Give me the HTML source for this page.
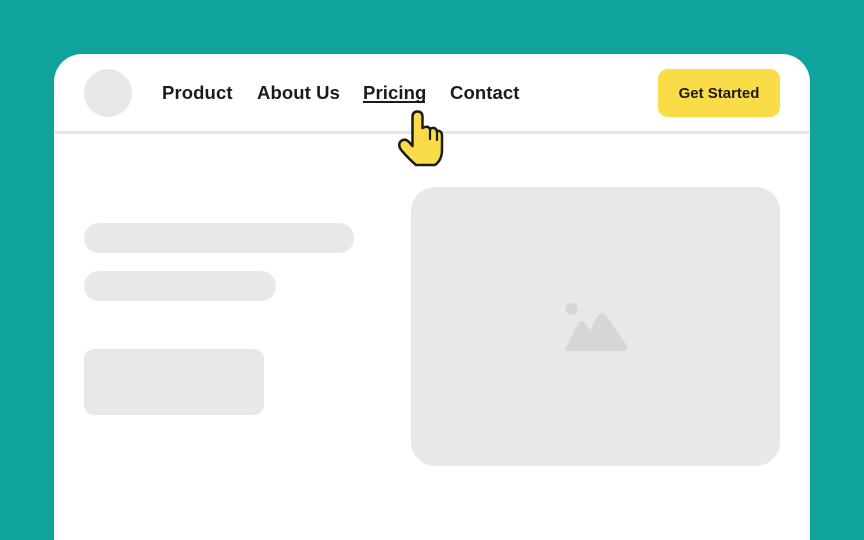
<!DOCTYPE html>
<html><head><style>
html,body{margin:0;width:864px;height:540px;overflow:hidden}
body{background:#10a39e;position:relative;font-family:"Liberation Sans",sans-serif}
.card{position:absolute;left:54px;top:54px;width:756px;height:486px;background:#fff;border-radius:28px 28px 0 0}
.av{position:absolute;left:84px;top:69px;width:48px;height:48px;border-radius:50%;background:#e8e8ea}
.nav{position:absolute;top:82px;font-size:18.5px;font-weight:bold;color:#1b1b1f;letter-spacing:0.1px}
.btn{position:absolute;left:658px;top:69px;width:122px;height:48px;border-radius:10px;background:#fadc48;font-size:15px;font-weight:bold;color:#1b1b1f;text-align:center;line-height:50px}
.line{position:absolute;left:54px;top:131px;width:756px;height:3px;background:#e6e6e8}
.g{position:absolute;background:#e8e8ea}
.ul{position:absolute;left:363px;top:101px;width:62px;height:2px;background:#1b1b1f}
</style></head><body>
<div class="card"></div>
<div class="av"></div>
<div class="nav" style="left:162px">Product</div>
<div class="nav" style="left:257px">About Us</div>
<div class="nav" style="left:363px">Pricing</div>
<div class="ul"></div>
<div class="nav" style="left:450px">Contact</div>
<div class="btn">Get Started</div>
<div class="line"></div>
<div class="g" style="left:84px;top:223px;width:270px;height:30px;border-radius:15px"></div>
<div class="g" style="left:84px;top:271px;width:192px;height:30px;border-radius:15px"></div>
<div class="g" style="left:84px;top:349px;width:180px;height:66px;border-radius:10px"></div>
<div class="g" style="left:411px;top:187px;width:369px;height:279px;border-radius:24px"></div>
<svg style="position:absolute;left:0;top:0" width="864" height="540">
<circle cx="571.5" cy="309" r="6" fill="#d6d6d8"/>
<path d="M566 350 L578 326 Q582 318 586 326 L590 333 L598 317 Q602 311 606 317 L626 346 Q628 350 623 350 Z" fill="#d6d6d8" stroke="#d6d6d8" stroke-width="2" stroke-linejoin="round"/>
<path d="M412.5 117 Q412.5 111.5 417.5 111.5 Q422.5 111.5 422.5 117 L422.5 128 Q428 125 430 129 Q435 126 437 131 Q442 130 442 136 L442 150 Q442 160 435 165 L416 165 Q410 160 402 151 Q397 145 401 141 Q405 138 409 142 L412.5 146 Z" fill="#fadc48" stroke="#1b1b1f" stroke-width="2.5" stroke-linejoin="round"/>
<path d="M430 129 L430 139 M437 131 L437 140" stroke="#1b1b1f" stroke-width="2.2" stroke-linecap="round" fill="none"/>
</svg>
</body></html>
